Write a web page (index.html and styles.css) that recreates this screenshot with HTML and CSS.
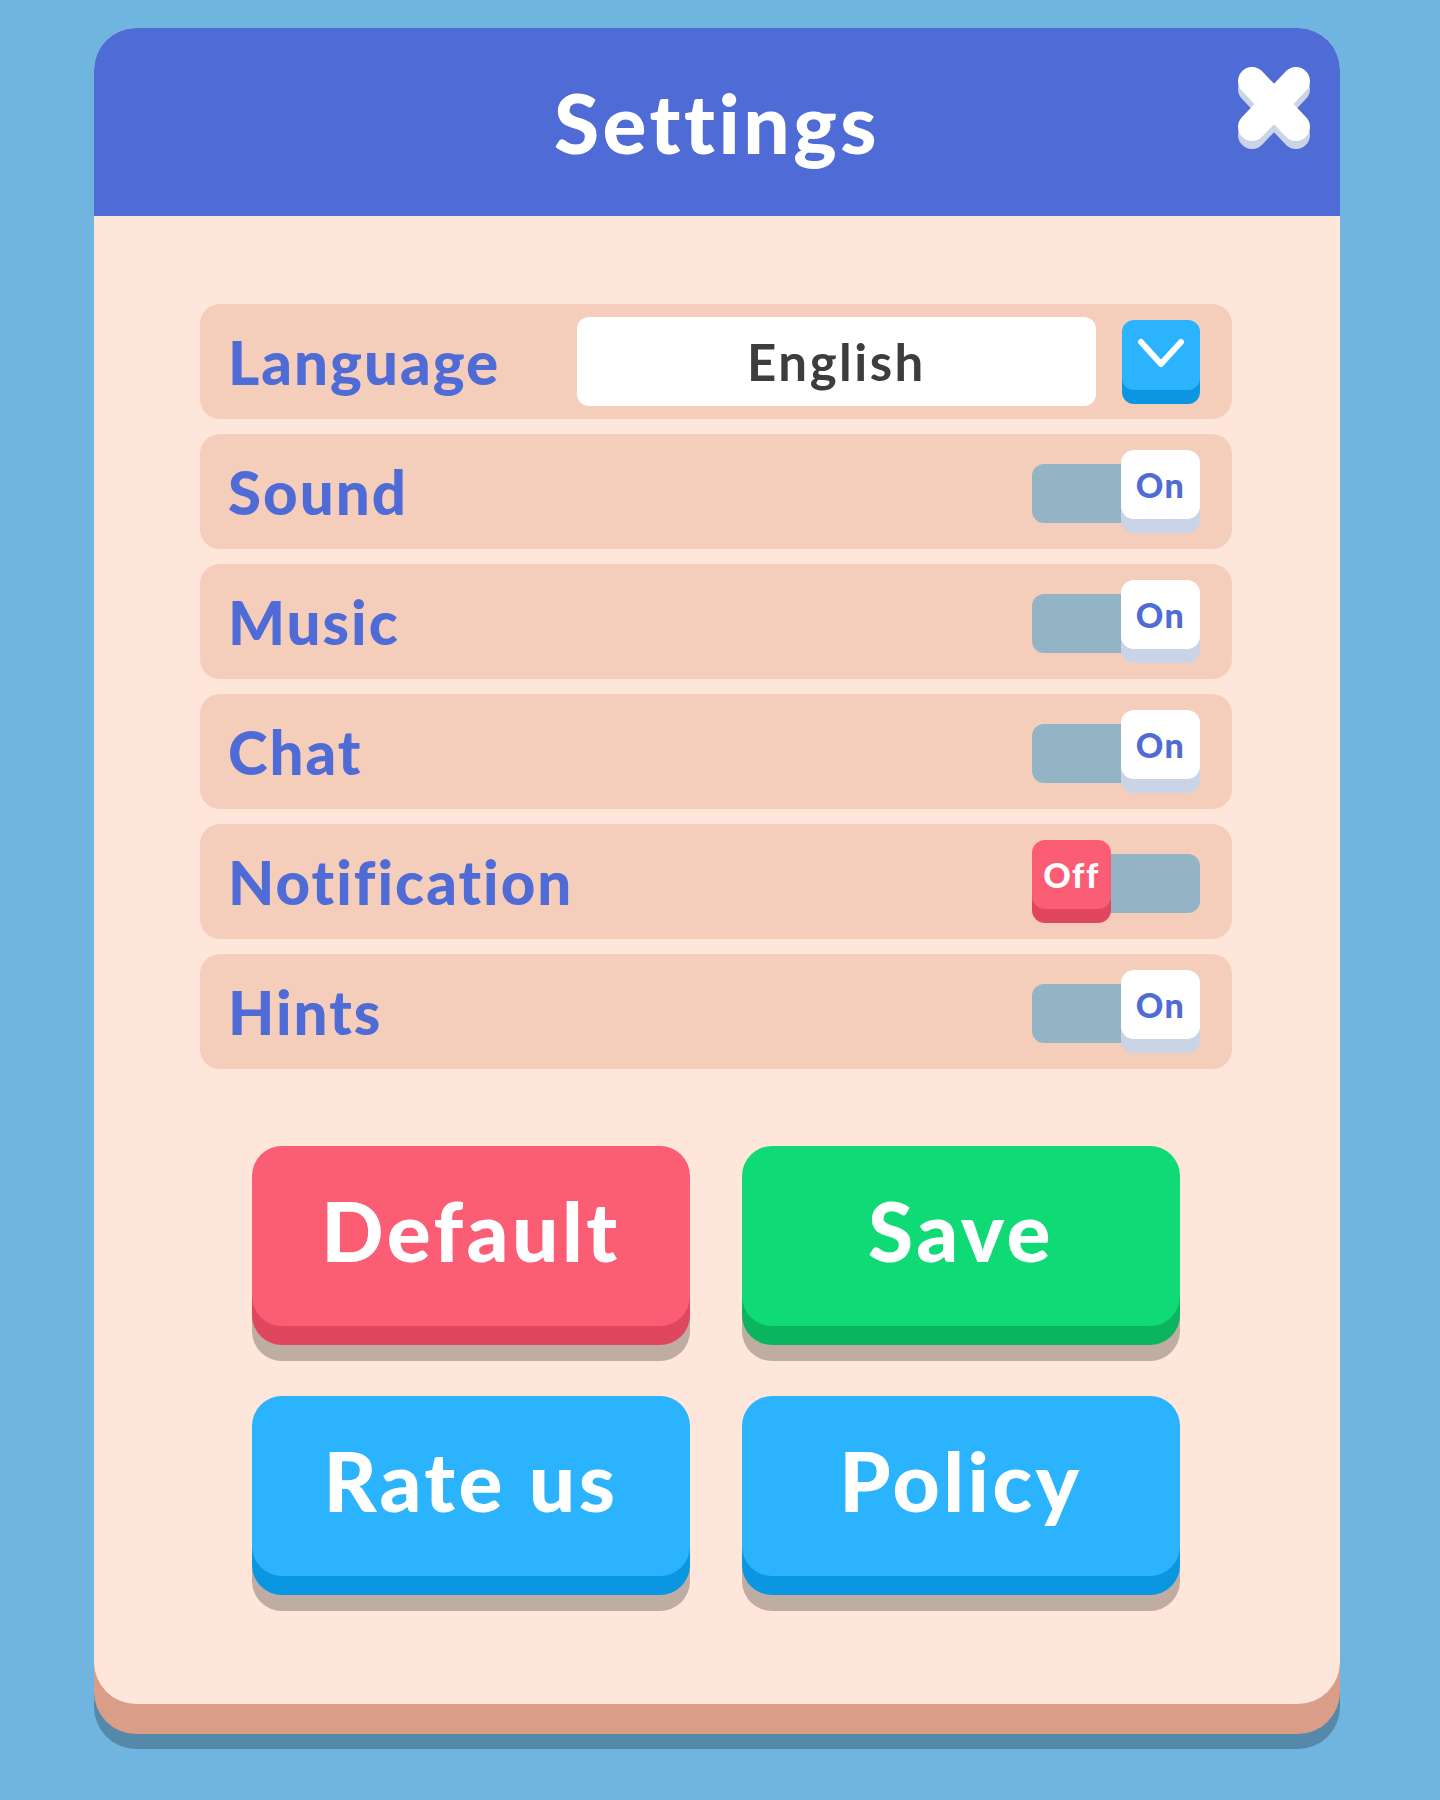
FILE: index.html
```html
<!DOCTYPE html>
<html lang="en">
<head>
<meta charset="utf-8">
<title>Settings</title>
<link rel="stylesheet" href="styles.css">
</head>
<body>
<div class="panel">
  <header class="panel-header">
    <h1 class="title">Settings</h1>
    <button class="close" aria-label="Close">
      <svg width="72" height="82" viewBox="0 0 72 82">
        <g stroke="#C9D5E6" stroke-width="28" stroke-linecap="round" transform="translate(0 8)">
          <line x1="14" y1="14" x2="58" y2="60"/>
          <line x1="58" y1="14" x2="14" y2="60"/>
        </g>
        <g stroke="#FFFFFF" stroke-width="28" stroke-linecap="round">
          <line x1="14" y1="14" x2="58" y2="60"/>
          <line x1="58" y1="14" x2="14" y2="60"/>
        </g>
      </svg>
    </button>
  </header>
  <div class="panel-body">
    <div class="rows">
      <div class="row">
        <span class="label">Language</span>
        <div class="lang">
          <div class="lang-box">English</div>
          <button class="lang-btn" aria-label="Choose language">
            <svg width="48" height="32" viewBox="0 0 48 32"><polyline points="4,4 24,26 44,4" fill="none" stroke="#fff" stroke-width="6" stroke-linecap="round" stroke-linejoin="round"/></svg>
          </button>
        </div>
      </div>
      <div class="row">
        <span class="label">Sound</span>
        <div class="toggle on"><div class="track"></div><div class="knob">On</div></div>
      </div>
      <div class="row">
        <span class="label">Music</span>
        <div class="toggle on"><div class="track"></div><div class="knob">On</div></div>
      </div>
      <div class="row">
        <span class="label">Chat</span>
        <div class="toggle on"><div class="track"></div><div class="knob">On</div></div>
      </div>
      <div class="row">
        <span class="label">Notification</span>
        <div class="toggle off"><div class="track"></div><div class="knob">Off</div></div>
      </div>
      <div class="row">
        <span class="label">Hints</span>
        <div class="toggle on"><div class="track"></div><div class="knob">On</div></div>
      </div>
    </div>
    <div class="buttons">
      <button class="btn red">Default</button>
      <button class="btn green">Save</button>
      <button class="btn blue">Rate us</button>
      <button class="btn blue">Policy</button>
    </div>
  </div>
</div>
</body>
</html>
```
FILE: styles.css
```css
* { box-sizing: border-box; }
html, body { margin: 0; padding: 0; }
body {
  background: #70B5E0;
  font-family: "Lato", "Noto Sans", sans-serif;
  width: 1440px;
  height: 1800px;
}
.panel {
  margin: 28px 0 0 94px;
  width: 1246px;
  background: #FEE6DA;
  border-radius: 42px;
  box-shadow: 0 30px 0 #DA9D87, 0 45px 0 #5489AA;
}
.panel-header {
  position: relative;
  height: 188px;
  background: #4F6BD6;
  border-radius: 42px 42px 0 0;
  display: flex;
  align-items: center;
  justify-content: center;
}
.title {
  margin: 0;
  color: #fff;
  font-size: 82px;
  font-weight: 900;
  letter-spacing: 3.5px;
  line-height: 1;
}
.close {
  position: absolute;
  top: 39px;
  right: 30px;
  padding: 0;
  border: 0;
  background: none;
  width: 72px;
  height: 82px;
}
.close svg { display: block; }
.panel-body {
  padding: 88px 108px 93px 106px;
}
.rows {
  display: flex;
  flex-direction: column;
  gap: 15px;
}
.row {
  height: 115px;
  background: #F5CDBB;
  border-radius: 20px;
  display: flex;
  align-items: center;
  justify-content: space-between;
  padding: 0 32px 0 28px;
}
.label {
  color: #4F6BD6;
  font-size: 60px;
  font-weight: 900;
  letter-spacing: 2px;
  line-height: 1;
}
.lang {
  display: flex;
  align-items: center;
  gap: 26px;
}
.lang-box {
  width: 519px;
  height: 89px;
  background: #fff;
  border-radius: 12px;
  display: flex;
  align-items: center;
  justify-content: center;
  color: #3D3D3D;
  font-size: 51px;
  font-weight: 700;
  letter-spacing: 2.5px;
}
.lang-btn {
  width: 78px;
  height: 70px;
  margin-bottom: 14px;
  padding: 0;
  border: 0;
  border-radius: 12px;
  background: #2BB3FD;
  box-shadow: 0 14px 0 #0A96E0;
  display: flex;
  align-items: center;
  justify-content: center;
}
.lang-btn svg { display: block; margin-top: -2px; }
.toggle {
  position: relative;
  width: 168px;
  height: 83px;
}
.track {
  margin-top: 14px;
  height: 59px;
  border-radius: 12px;
  background: #93B4C5;
}
.knob {
  position: absolute;
  top: 0;
  width: 79px;
  height: 69px;
  border-radius: 13px;
  display: flex;
  align-items: center;
  justify-content: center;
  font-size: 34px;
  font-weight: 900;
  letter-spacing: 1.5px;
}
.toggle.on .knob {
  right: 0;
  background: #fff;
  color: #4F6BD6;
  box-shadow: 0 14px 0 #C9D5E6;
}
.toggle.off .knob {
  left: 0;
  background: #FA5D74;
  color: #fff;
  box-shadow: 0 14px 0 #E0475E;
}
.buttons {
  margin-top: 77px;
  display: grid;
  grid-template-columns: 438px 438px;
  column-gap: 52px;
  row-gap: 70px;
  justify-content: center;
  padding-bottom: 35px;
}
.btn {
  height: 180px;
  border: 0;
  border-radius: 30px;
  color: #fff;
  font-family: "Lato", "Noto Sans", sans-serif;
  font-size: 82px;
  font-weight: 900;
  letter-spacing: 3.5px;
  padding: 0 0 12px 0;
  line-height: 1;
}
.btn.red { background: #FA5D74; box-shadow: 0 19px 0 #E0475E, 0 35px 0 #BFADA3; }
.btn.green { background: #0FDA76; box-shadow: 0 19px 0 #0BB560, 0 35px 0 #BFADA3; }
.btn.blue { background: #2BB3FD; box-shadow: 0 19px 0 #0A96E0, 0 35px 0 #BFADA3; }
```
